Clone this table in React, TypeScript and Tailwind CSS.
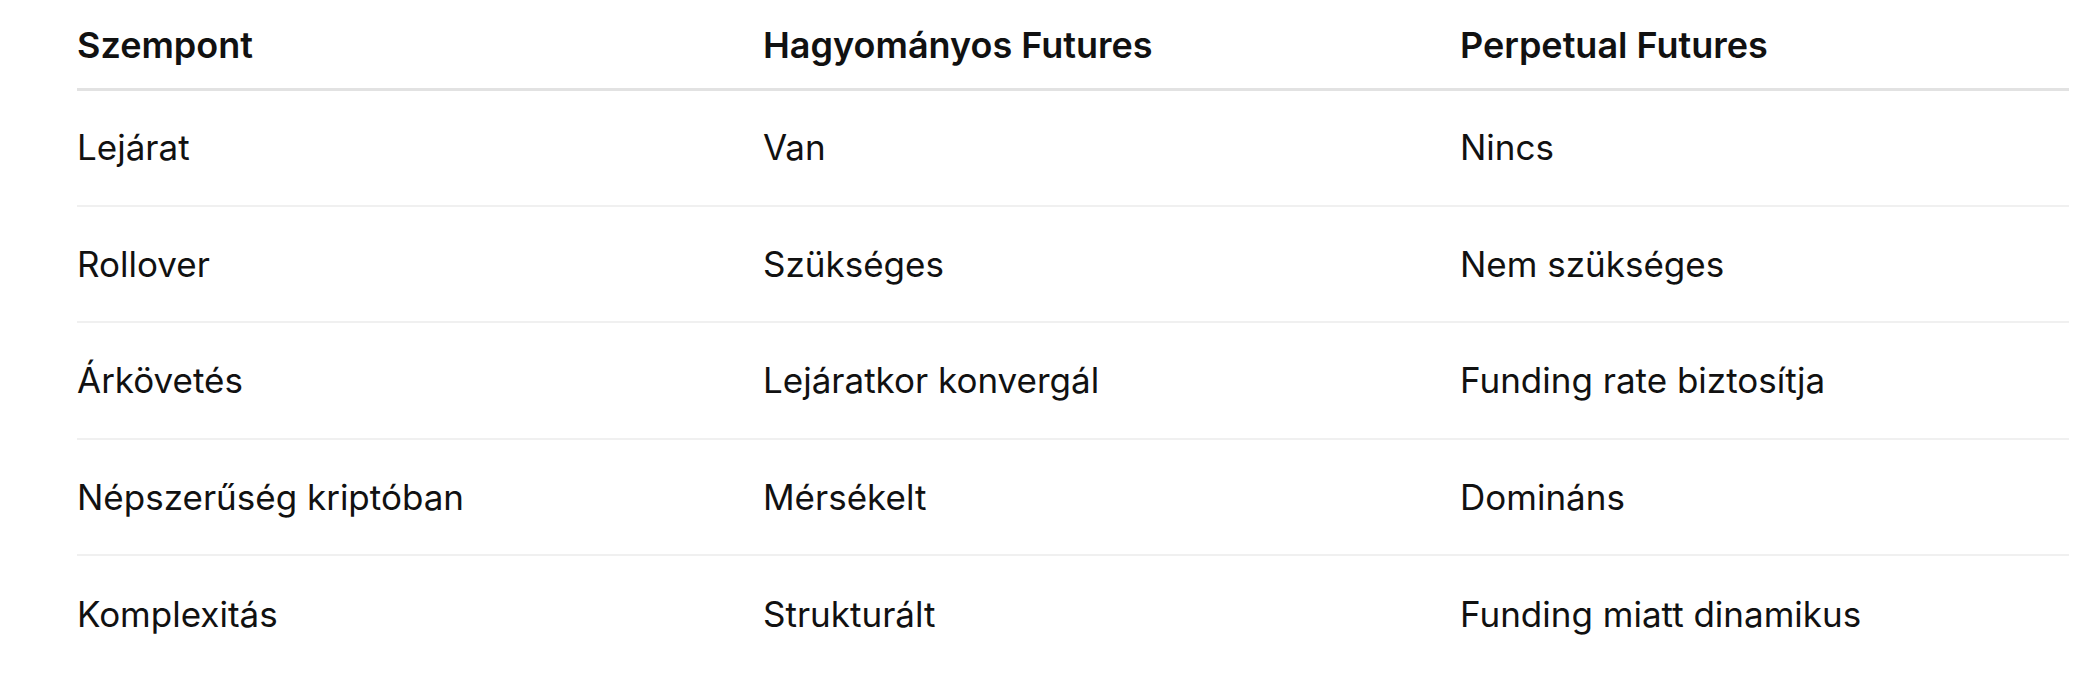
const rows = [
  ["Lejárat", "Van", "Nincs"],
  ["Rollover", "Szükséges", "Nem szükséges"],
  ["Árkövetés", "Lejáratkor konvergál", "Funding rate biztosítja"],
  ["Népszerűség kriptóban", "Mérsékelt", "Domináns"],
  ["Komplexitás", "Strukturált", "Funding miatt dinamikus"],
];

export default function App() {
  return (
    <div className="min-h-[682px] bg-white pl-[77px] font-['Inter',sans-serif] text-[#111111]">
      <table className="w-[1992px] table-fixed border-collapse text-left">
        <colgroup>
          <col className="w-[686px]" />
          <col className="w-[697px]" />
          <col className="w-[609px]" />
        </colgroup>
        <thead>
          <tr className="h-[89px] border-b-[3px] border-[#e2e2e2] text-[36px]">
            <th className="pt-[2px] font-semibold">Szempont</th>
            <th className="pt-[2px] font-semibold">Hagyományos Futures</th>
            <th className="pt-[2px] font-semibold">Perpetual Futures</th>
          </tr>
        </thead>
        <tbody>
          {rows.map((row, i) => (
            <tr
              key={row[0]}
              className={
                i < rows.length - 1
                  ? "h-[116.5px] border-b-2 border-[#f0f0f0] text-[35px]"
                  : "h-[116.5px] text-[35px]"
              }
            >
              {row.map((cell) => (
                <td key={cell}>{cell}</td>
              ))}
            </tr>
          ))}
        </tbody>
      </table>
    </div>
  );
}
